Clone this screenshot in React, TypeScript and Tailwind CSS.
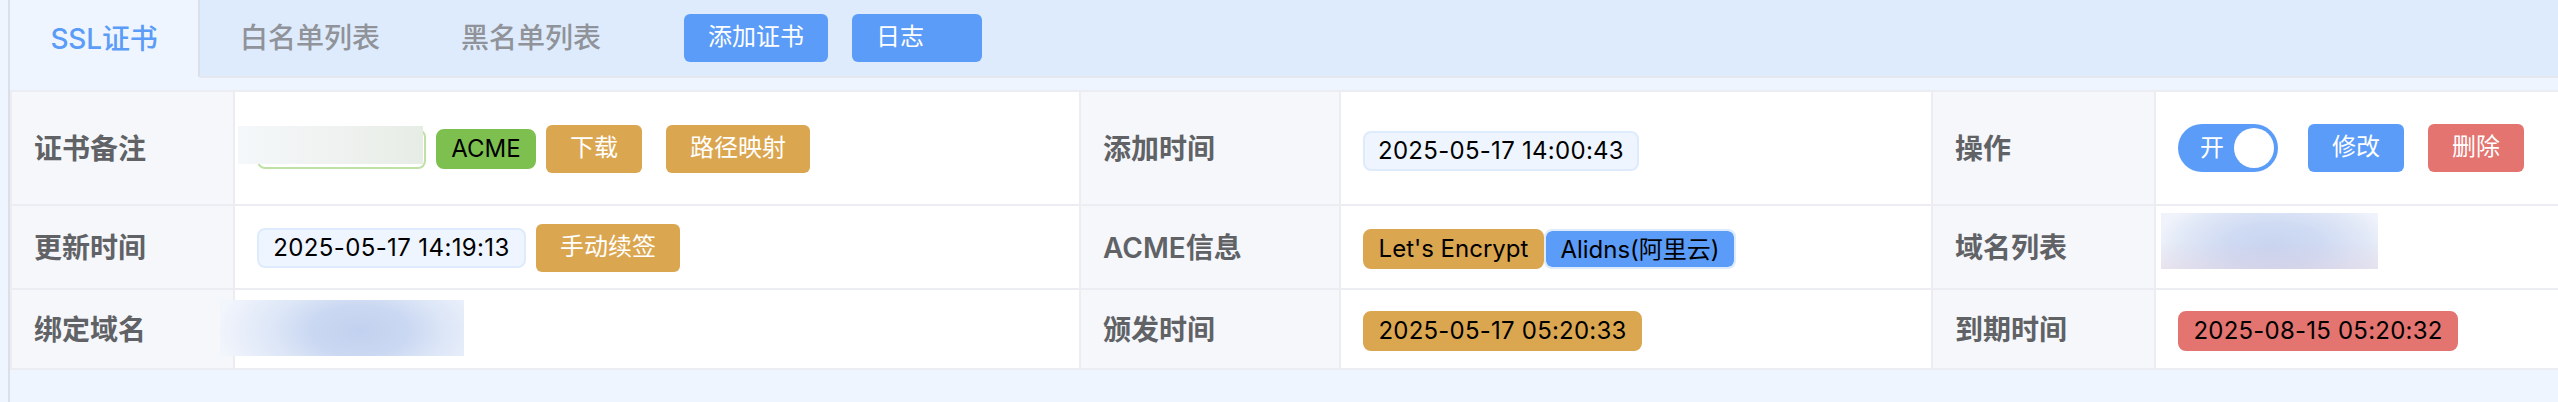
import React from 'react';
import clsx from 'clsx';

interface TagProps {
  className?: string;
  children?: React.ReactNode;
}

const Tag: React.FC<TagProps> = ({ className, children }) => (
  <span
    className={clsx(
      'flex h-10 shrink-0 items-center justify-center rounded-lg border-2 text-2xl leading-none whitespace-nowrap text-black',
      className
    )}
  >
    {children}
  </span>
);

const Button: React.FC<TagProps> = ({ className, children }) => (
  <button
    className={clsx(
      'flex h-12 shrink-0 items-center rounded-md px-6 pb-[2px] text-2xl leading-none font-normal whitespace-nowrap text-white',
      className
    )}
  >
    {children}
  </button>
);

const Label: React.FC<TagProps> = ({ children }) => (
  <div className="flex items-center border-r-2 border-b-2 border-[#ebedf3] bg-[#f5f7fb] pt-[2px] pl-[22px] text-[28px] leading-none font-semibold text-[#606266]">
    {children}
  </div>
);

const Cell: React.FC<TagProps> = ({ className, children }) => (
  <div className={clsx('relative flex items-center border-r-2 border-b-2 border-[#ebedf3] bg-white pl-[22px]', className)}>
    {children}
  </div>
);

const tabs = ['白名单列表', '黑名单列表'];

const App: React.FC = () => {
  return (
    <div className="flex h-[402px] w-[2558px] overflow-hidden bg-[#eef5fe] pl-2 font-['Inter','Noto_Sans_CJK_SC',sans-serif]">
      <div className="w-[2550px] shrink-0 border-l-2 border-[#dcdfe6]">
        {/* Tabs */}
        <div className="flex h-[78px]">
          <div className="flex w-[188px] items-center justify-center text-[28px] leading-none font-medium tracking-[-0.2px] text-[#5b9cf8]">SSL证书</div>
          <div className="flex flex-1 items-center rounded-bl-[3px] border-b-2 border-l-2 border-b-[#e4e7ed] border-l-[#dcdfe6] bg-[#deebfc]">
            {tabs.map((tab) => (
              <div key={tab} className="w-[221px] pl-10 text-[28px] leading-none font-medium whitespace-nowrap text-[#909399]">
                {tab}
              </div>
            ))}
            <Button className="ml-[42px] bg-[#5b9cf8]">添加证书</Button>
            <Button className="ml-6 w-[130px] bg-[#5b9cf8]">日志</Button>
          </div>
        </div>

        {/* Certificate details */}
        <div className="mt-3 grid w-[2600px] grid-cols-[223px_846px_260px_592px_223px_1fr] grid-rows-[114px_84px_80px] border-t-2 border-l-2 border-[#ebedf3]">
          <Label>证书备注</Label>
          <Cell className="pt-[2px]">
            <Tag className="w-[169px] border-[#bfe1a6] bg-white" />
            <div className="absolute top-[34px] left-[3px] h-[38px] w-[185px] bg-linear-to-r from-[#f4f8fa] via-[#f0f2f1] to-[#e6ede5]" />
            <Tag className="ml-2.5 w-[100px] border-[#7ec050] bg-[#7ec050]">ACME</Tag>
            <Button className="ml-2.5 bg-[#dba650]">下载</Button>
            <Button className="ml-6 bg-[#dba650]">路径映射</Button>
          </Cell>
          <Label>添加时间</Label>
          <Cell className="pt-[6px]">
            <Tag className="w-[276px] border-[#deebfc] bg-[#eef5fe] tracking-[0.28px]">2025-05-17 14:00:43</Tag>
          </Cell>
          <Label>操作</Label>
          <Cell>
            <div className="flex h-12 w-[100px] items-center justify-between rounded-full bg-[#5b9cf8] pr-1 pl-[22px]">
              <span className="text-2xl leading-none font-normal text-white">开</span>
              <span className="size-10 rounded-full bg-white" />
            </div>
            <Button className="ml-[30px] bg-[#5b9cf8]">修改</Button>
            <Button className="ml-6 bg-[#e37470]">删除</Button>
          </Cell>

          <Label>更新时间</Label>
          <Cell className="pt-[2px]">
            <Tag className="w-[269px] border-[#deebfc] bg-[#eef5fe] tracking-[0.38px]">2025-05-17 14:19:13</Tag>
            <Button className="ml-2.5 bg-[#dba650]">手动续签</Button>
          </Cell>
          <Label>ACME信息</Label>
          <Cell className="pt-1">
            <Tag className="w-[181px] border-[#dba650] bg-[#dba650]">Let's Encrypt</Tag>
            <Tag className="w-[192px] border-[#deebfc] bg-[#5b9cf8] bg-clip-padding pt-[2px]">Alidns(阿里云)</Tag>
          </Cell>
          <Label>域名列表</Label>
          <Cell>
            <div className="absolute top-[7px] left-[5px] h-14 w-[217px] bg-[radial-gradient(ellipse_55%_100%_at_52%_60%,#c8d4ef_0%,#cfdaf3_40%,#e2e9f7_80%,#f0f3fb_100%)]">
              <div className="h-full bg-linear-to-b from-transparent from-50% to-[#dccbdc]/40" />
            </div>
          </Cell>

          <Label>绑定域名</Label>
          <Cell>
            <div className="absolute top-[10px] left-[-15px] h-14 w-[244px] bg-[radial-gradient(ellipse_58%_130%_at_57%_55%,#c2d1ef_0%,#cbd8f2_35%,#dce6f7_60%,#e8eefa_82%,#f1f5fc_100%)]" />
          </Cell>
          <Label>颁发时间</Label>
          <Cell className="pt-1">
            <Tag className="w-[279px] border-[#dba650] bg-[#dba650] tracking-[0.22px]">2025-05-17 05:20:33</Tag>
          </Cell>
          <Label>到期时间</Label>
          <Cell className="pt-1">
            <Tag className="w-[280px] border-[#e37470] bg-[#e37470] tracking-[0.22px]">2025-08-15 05:20:32</Tag>
          </Cell>
        </div>
      </div>
    </div>
  );
};

export default App;
